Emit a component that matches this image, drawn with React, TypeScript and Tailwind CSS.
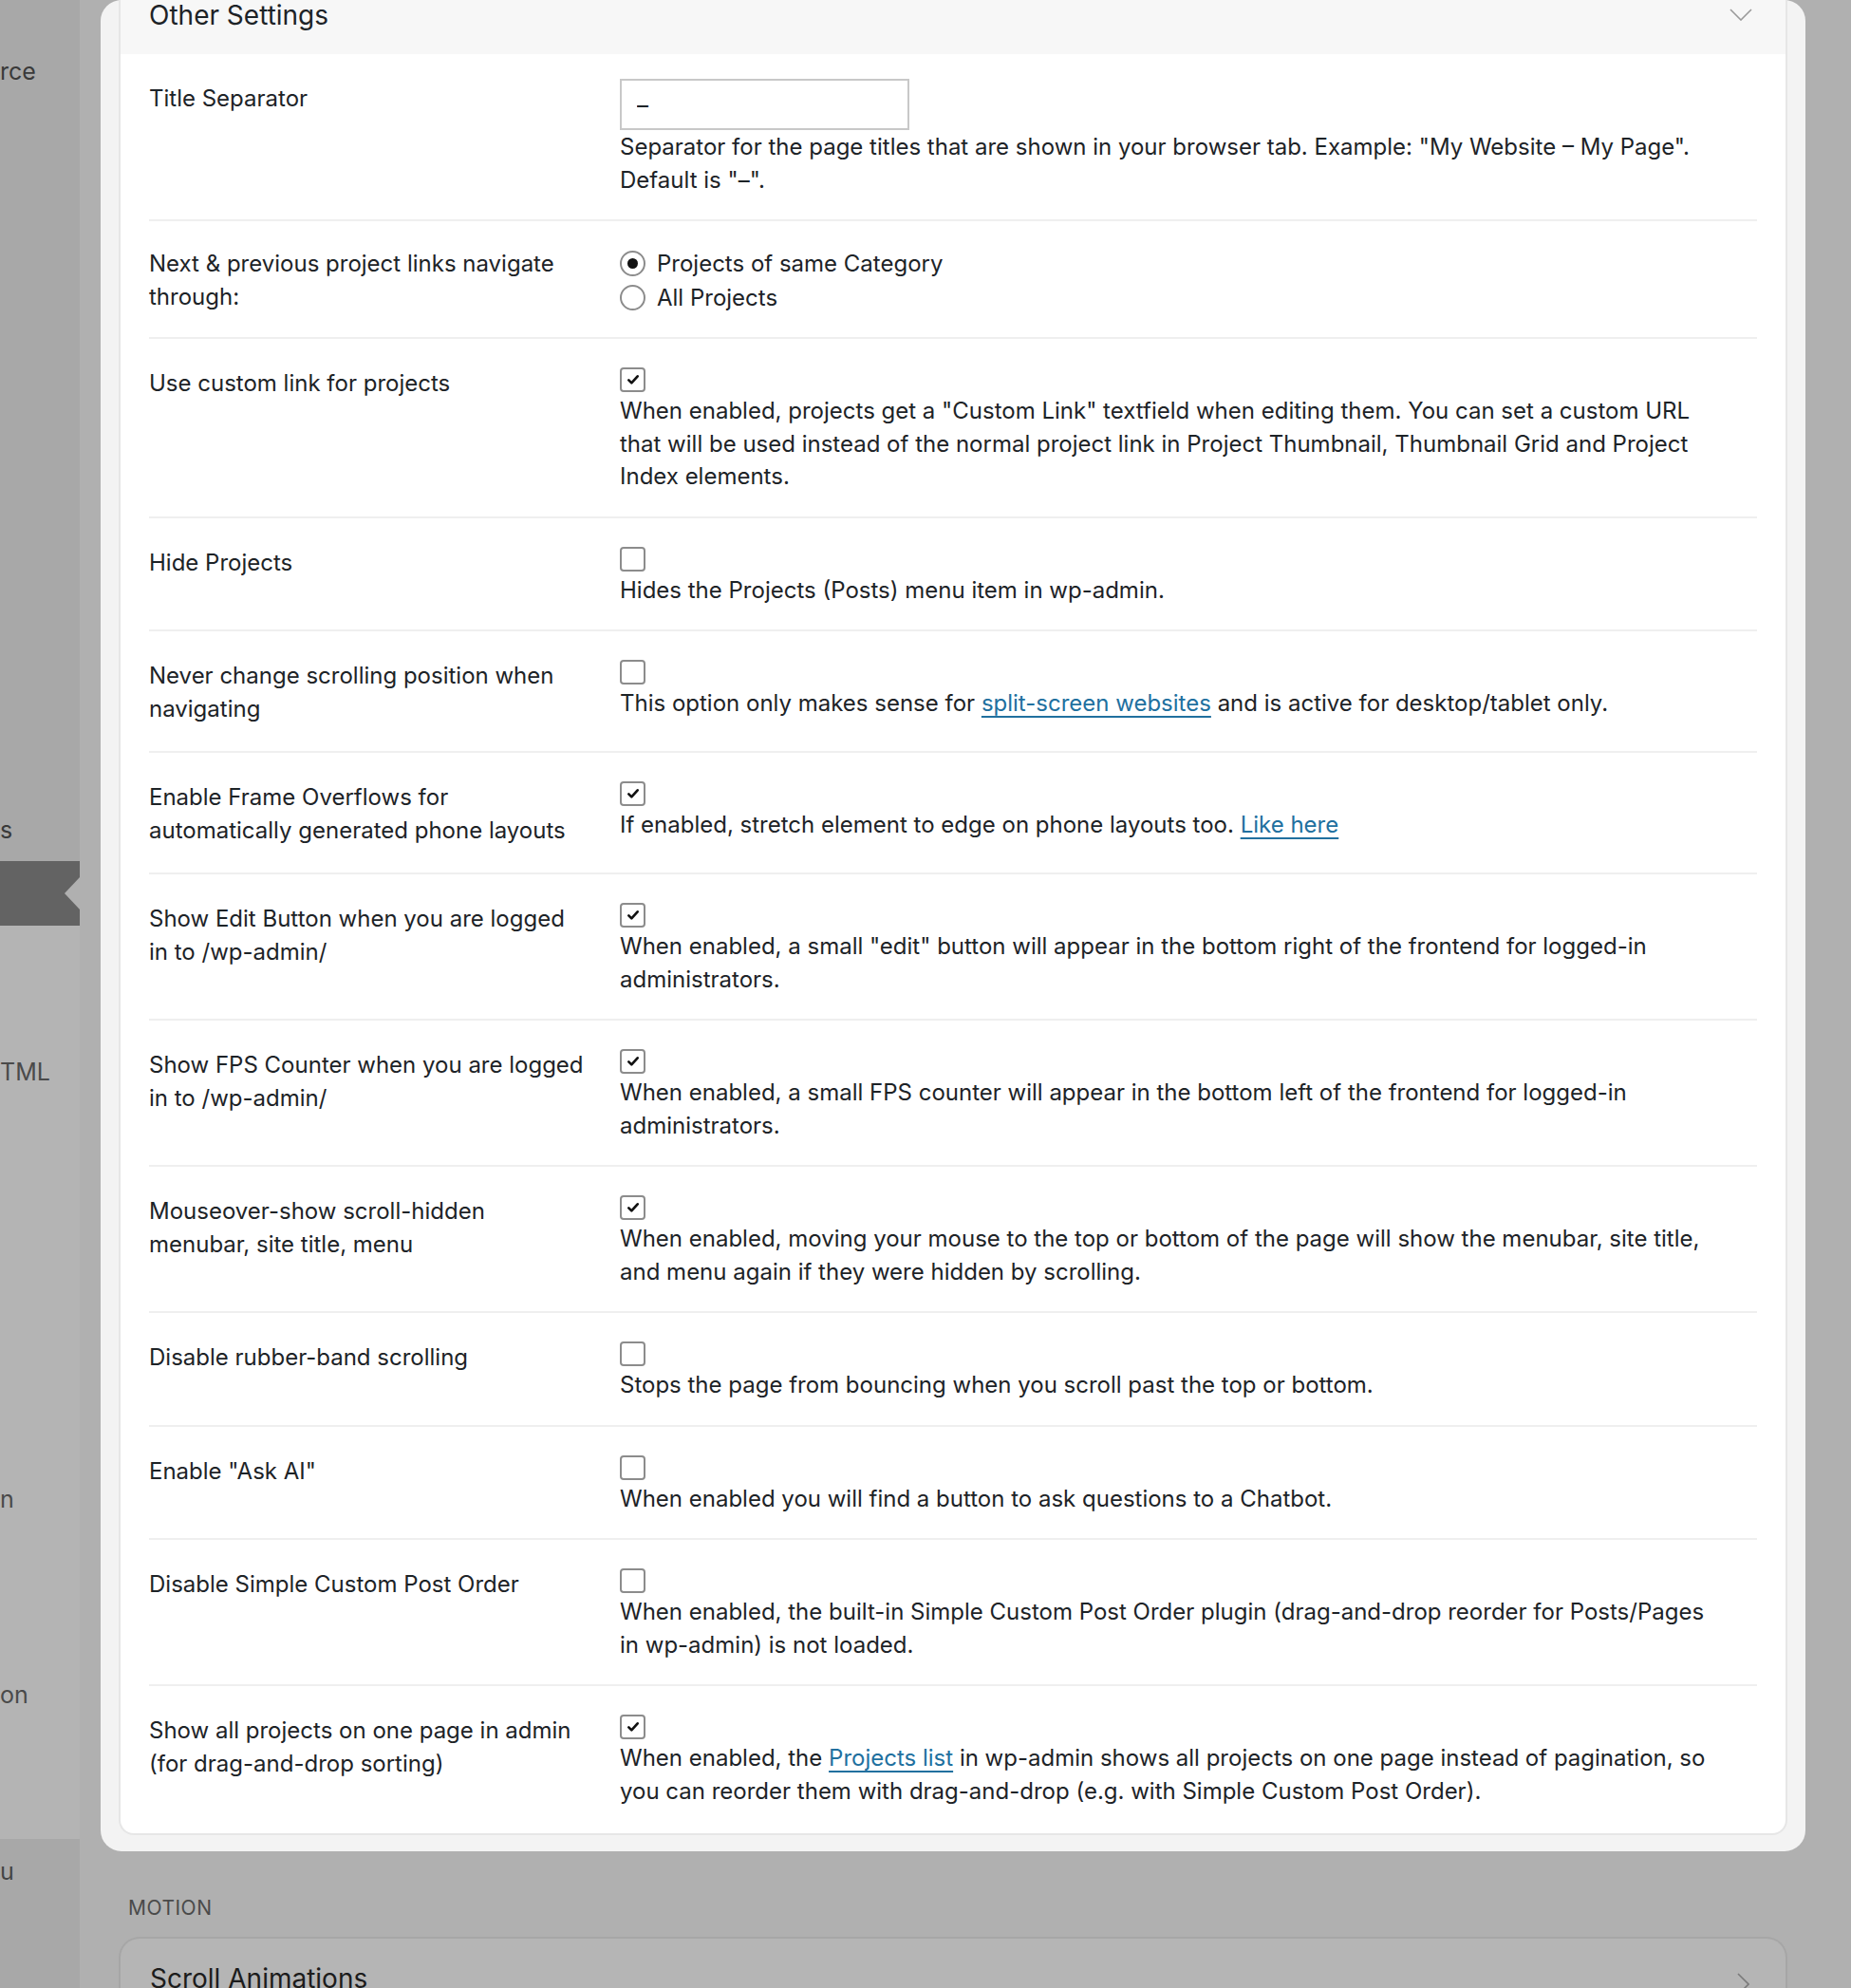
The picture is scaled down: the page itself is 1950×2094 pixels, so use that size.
import React from 'react';

type SettingRow = {
  label: React.ReactNode;
  checked: boolean;
  desc: React.ReactNode;
};

const linkCls = "text-[#21709f] underline decoration-[1.5px] underline-offset-[5px]";

const rows: SettingRow[] = [
  {
    label: "Use custom link for projects",
    checked: true,
    desc: (
      <>
        When enabled, projects get a "Custom Link" textfield when editing them. You can set a custom URL<br />
        that will be used instead of the normal project link in Project Thumbnail, Thumbnail Grid and Project<br />
        Index elements.
      </>
    ),
  },
  {
    label: "Hide Projects",
    checked: false,
    desc: "Hides the Projects (Posts) menu item in wp-admin.",
  },
  {
    label: <>Never change scrolling position when<br />navigating</>,
    checked: false,
    desc: (
      <>
        This option only makes sense for <a className={linkCls}>split-screen websites</a> and is active for desktop/tablet only.
      </>
    ),
  },
  {
    label: <>Enable Frame Overflows for<br />automatically generated phone layouts</>,
    checked: true,
    desc: (
      <>
        If enabled, stretch element to edge on phone layouts too. <a className={linkCls}>Like here</a>
      </>
    ),
  },
  {
    label: <>Show Edit Button when you are logged<br />in to /wp-admin/</>,
    checked: true,
    desc: (
      <>
        When enabled, a small "edit" button will appear in the bottom right of the frontend for logged-in<br />
        administrators.
      </>
    ),
  },
  {
    label: <>Show FPS Counter when you are logged<br />in to /wp-admin/</>,
    checked: true,
    desc: (
      <>
        When enabled, a small FPS counter will appear in the bottom left of the frontend for logged-in<br />
        administrators.
      </>
    ),
  },
  {
    label: <>Mouseover-show scroll-hidden<br />menubar, site title, menu</>,
    checked: true,
    desc: (
      <>
        When enabled, moving your mouse to the top or bottom of the page will show the menubar, site title,<br />
        and menu again if they were hidden by scrolling.
      </>
    ),
  },
  {
    label: "Disable rubber-band scrolling",
    checked: false,
    desc: "Stops the page from bouncing when you scroll past the top or bottom.",
  },
  {
    label: 'Enable "Ask AI"',
    checked: false,
    desc: "When enabled you will find a button to ask questions to a Chatbot.",
  },
  {
    label: "Disable Simple Custom Post Order",
    checked: false,
    desc: (
      <>
        When enabled, the built-in Simple Custom Post Order plugin (drag-and-drop reorder for Posts/Pages<br />
        in wp-admin) is not loaded.
      </>
    ),
  },
  {
    label: <>Show all projects on one page in admin<br />(for drag-and-drop sorting)</>,
    checked: true,
    desc: (
      <>
        When enabled, the <a className={linkCls}>Projects list</a> in wp-admin shows all projects on one page instead of pagination, so<br />
        you can reorder them with drag-and-drop (e.g. with Simple Custom Post Order).
      </>
    ),
  },
];

const Checkbox: React.FC<{ checked: boolean }> = ({ checked }) => (
  <div className="flex h-[26px] w-[27px] items-center justify-center rounded-[4px] border-2 border-[#8c8c8c] bg-white">
    {checked && (
      <svg width="16" height="16" viewBox="0 0 24 24" fill="none" stroke="#111" strokeWidth="4" strokeLinecap="round" strokeLinejoin="round">
        <path d="M5 12.5l4.5 4.5L19 6.5" />
      </svg>
    )}
  </div>
);

const Radio: React.FC<{ checked: boolean; label: string }> = ({ checked, label }) => (
  <div className="flex h-[36px] items-center gap-[12px]">
    <span className="flex h-[27px] w-[27px] items-center justify-center rounded-full border-2 border-[#8c8c8c] bg-white">
      {checked && <span className="h-[11px] w-[11px] rounded-full bg-[#111]" />}
    </span>
    <span>{label}</span>
  </div>
);

const App: React.FC = () => {
  return (
    <div className="flex h-[2094px] w-[1950px] overflow-hidden bg-[#b0b0b0] font-['Inter',sans-serif] text-[24px] leading-[35px] text-[#1d2327]">
      {/* admin menu, dimmed */}
      <aside className="flex w-[84px] shrink-0 flex-col text-[25px] text-[#3a3a3a]">
        <div className="h-[907px] bg-[#a8a8a8]">
          <div className="mt-[58px]">rce</div>
          <div className="mt-[764px]">s</div>
        </div>
        <div className="relative h-[68px] bg-[#636363]">
          <svg className="absolute right-0 top-[17px]" width="16" height="34" viewBox="0 0 16 34">
            <path d="M16 0L0 17L16 34Z" fill="#b0b0b0" />
          </svg>
        </div>
        <div className="h-[962px] bg-[#b4b4b4] text-[#4a4a4a]">
          <div className="mt-[137px]">TML</div>
          <div className="mt-[415px]">n</div>
          <div className="mt-[171px]">on</div>
        </div>
        <div className="flex-1 bg-[#a8a8a8] text-[#444]">
          <div className="mt-[17px]">u</div>
        </div>
      </aside>

      <main className="flex-1 pl-[22px] pr-[48px]">
        <section className="rounded-[22px] bg-[#f3f3f3] px-[19px] pb-[17px]">
          <div className="overflow-hidden rounded-b-[16px] border-x-2 border-b-2 border-[#e6e6e6] bg-white">
            <div className="flex h-[57px] items-start justify-between bg-[#f7f7f7] pl-[30px] pr-[35px]">
              <h2 className="-mt-[2px] text-[28px] leading-[36px]">Other Settings</h2>
              <svg className="mt-[9px]" width="24" height="13" viewBox="0 0 24 13" fill="none" stroke="#9a9a9a" strokeWidth="1.6">
                <path d="M1 1l11 11L23 1" />
              </svg>
            </div>

            <div className="px-[30px]">
              {/* title separator */}
              <div className="flex border-b-2 border-[#efefef] pt-[26px] pb-[24px]">
                <div className="mt-[3px] w-[496px] shrink-0">Title Separator</div>
                <div className="flex-1">
                  <input
                    readOnly
                    defaultValue="–"
                    className="block h-[54px] w-[305px] border-2 border-[#c8c8c8] bg-white pl-[16px] text-[24px] text-[#1d2327] outline-none"
                  />
                  <p>
                    Separator for the page titles that are shown in your browser tab. Example: "My Website – My Page".<br />
                    Default is "–".
                  </p>
                </div>
              </div>

              {/* next / previous */}
              <div className="flex border-b-2 border-[#efefef] pt-[25px] pb-[24px]">
                <div className="mt-[2px] w-[496px] shrink-0">Next &amp; previous project links navigate<br />through:</div>
                <div className="mt-[1px] flex-1">
                  <Radio checked label="Projects of same Category" />
                  <Radio checked={false} label="All Projects" />
                </div>
              </div>

              {rows.map((row, i) => (
                <div
                  key={i}
                  className={`flex pt-[29px] ${i < rows.length - 1 ? 'pb-[24px] border-b-2 border-[#efefef]' : 'pb-[27px]'}`}
                >
                  <div className="w-[496px] shrink-0 pb-[3px]">{row.label}</div>
                  <div className="flex-1 pt-[1px]">
                    <Checkbox checked={row.checked} />
                    <p className="mt-[3px] leading-[34.5px]">{row.desc}</p>
                  </div>
                </div>
              ))}
            </div>
          </div>
        </section>

        <div className="mt-[48px] pl-[29px] text-[21px] leading-[24px] tracking-[0.5px] text-[#4a4a4a]">MOTION</div>

        <div className="mx-[19px] mt-[18px] flex h-[80px] items-start justify-between rounded-t-[22px] border-x-2 border-t-2 border-[#a6a6a6] bg-[#b5b5b5] pl-[31px] pr-[38px] pt-[24px]">
          <span className="text-[28px] leading-[36px] text-[#1c1c1c]">Scroll Animations</span>
          <svg className="mt-[12px]" width="13" height="24" viewBox="0 0 13 24" fill="none" stroke="#7a7a7a" strokeWidth="1.6">
            <path d="M1 1l11 11L1 23" />
          </svg>
        </div>
      </main>
    </div>
  );
};

export default App;
